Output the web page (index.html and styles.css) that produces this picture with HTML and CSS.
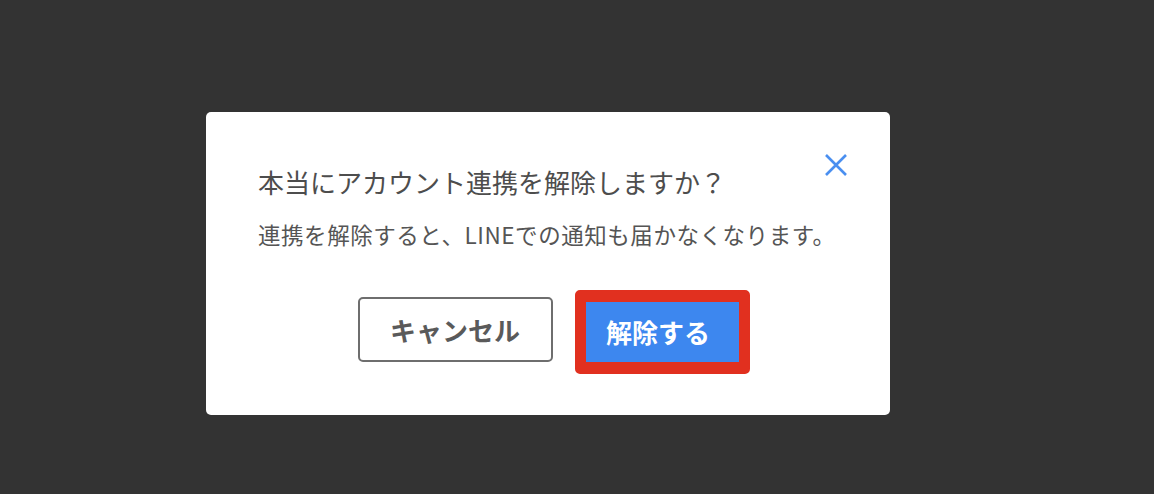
FILE: index.html
```html
<!DOCTYPE html>
<html lang="ja">
<head>
<meta charset="utf-8">
<title>連携解除</title>
<link rel="stylesheet" href="styles.css">
</head>
<body>
<div class="page">
  <div class="dialog">
    <button class="close" aria-label="閉じる">
      <svg width="24" height="24" viewBox="0 0 24 24"><path d="M2 2 L22 22 M22 2 L2 22" stroke="#4a8ff0" stroke-width="2.6" stroke-linecap="butt" fill="none"/></svg>
    </button>
    <h1 class="title">本当にアカウント連携を解除しますか？</h1>
    <p class="desc">連携を解除すると、LINEでの通知も届かなくなります。</p>
    <div class="actions">
      <button class="btn cancel">キャンセル</button>
      <button class="btn primary">解除する</button>
    </div>
  </div>
</div>
</body>
</html>
```

FILE: styles.css
```css
html, body {
  margin: 0;
  padding: 0;
  background: #333333;
}
body {
  width: 1154px;
  height: 494px;
  overflow: hidden;
  font-family: "Noto Sans CJK JP", "Noto Sans", sans-serif;
}
.page {
  padding: 112px 0 0 206px;
}
.dialog {
  position: relative;
  box-sizing: border-box;
  width: 684px;
  height: 303px;
  background: #ffffff;
  border-radius: 5px;
  padding: 52px 52px 0 52px;
}
.close {
  position: absolute;
  top: 41px;
  right: 42px;
  width: 24px;
  height: 24px;
  padding: 0;
  border: 0;
  background: transparent;
}
.close svg { display: block; }
.title {
  margin: 0;
  font-size: 26px;
  line-height: 36px;
  font-weight: 400;
  color: #4d4d4d;
  white-space: nowrap;
}
.desc {
  margin: 18px 0 0 0;
  font-size: 22.5px;
  line-height: 32px;
  font-weight: 400;
  letter-spacing: 0.55px;
  color: #555555;
  white-space: nowrap;
}
.actions {
  margin-top: 47px;
  display: flex;
  justify-content: center;
  align-items: flex-start;
  gap: 33px;
}
.btn {
  font-family: "Noto Sans CJK JP", "Noto Sans", sans-serif;
  font-size: 26px;
  font-weight: 700;
  line-height: 1;
  padding: 0;
  box-sizing: border-box;
  display: flex;
  align-items: center;
  justify-content: center;
}
.cancel {
  width: 195px;
  height: 65px;
  background: #ffffff;
  color: #5a5a5a;
  border: 2.5px solid #6e6e6e;
  border-radius: 5px;
}
.primary {
  position: relative;
  width: 153px;
  height: 62px;
  margin-top: 5px;
  background: #3d87ef;
  color: #ffffff;
  border: 0;
  border-bottom: 2px solid #d3def0;
  border-radius: 0;
  padding-right: 8px;
}
.primary::after {
  content: "";
  position: absolute;
  left: -11px;
  top: -12px;
  right: -11px;
  bottom: -12px;
  border: 11px solid #e1301f;
  border-top-width: 12px;
  border-bottom-width: 12px;
  border-radius: 5px;
  pointer-events: none;
}
```
